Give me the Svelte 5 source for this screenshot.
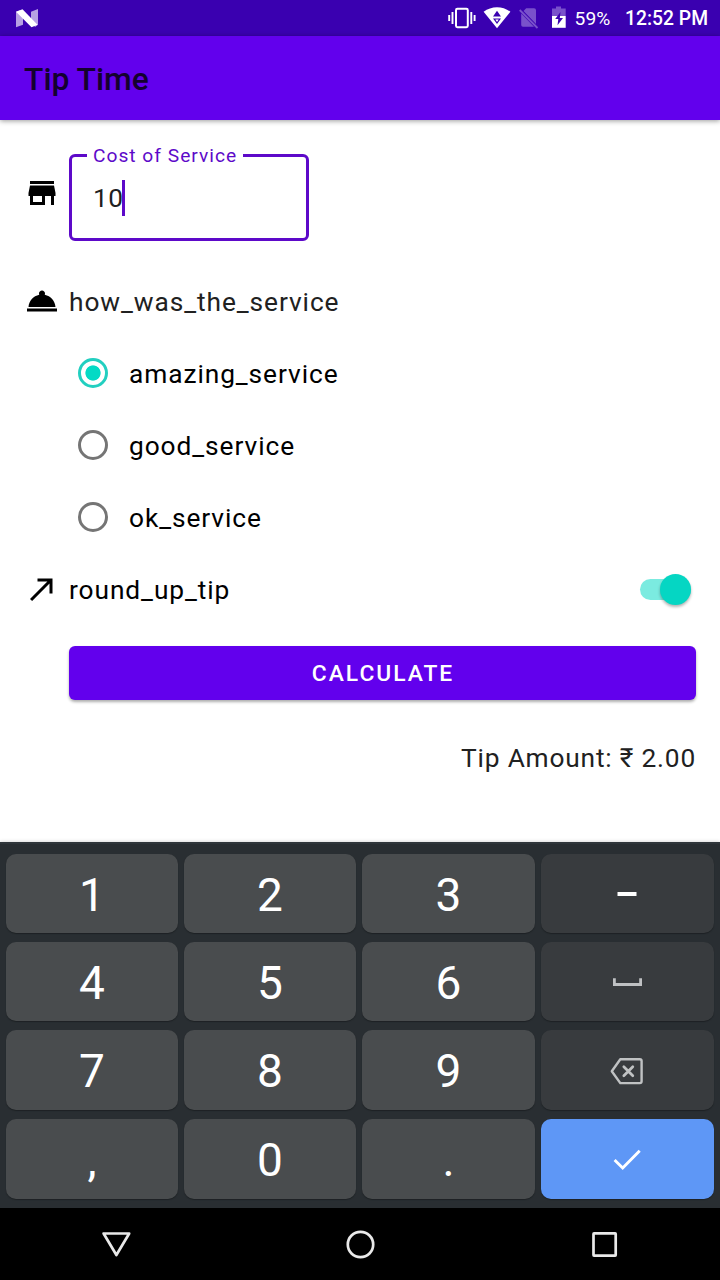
<script>
  const ratings = ['amazing_service', 'good_service', 'ok_service'];
  let selected = $state('amazing_service');
  const keys = ['1', '2', '3', 'minus', '4', '5', '6', 'space', '7', '8', '9', 'delete', ',', '0', '.', 'done'];
  const special = ['minus', 'space', 'delete', 'done'];
</script>

<div class="screen">
  <header class="status">
    <svg class="n" width="24" height="20" viewBox="0 0 24 20">
      <path d="M1 2.8 5 1.2 8 7V15.8L1 18.2zM16 2.7 23 0V15.8L20 18 16 12z" fill="#b7a0e3" />
      <path d="M1 2.8 7.5 0.3 22.5 15.8 16.5 18.2z" fill="#fff" />
    </svg>
    <div class="tray">
      <svg width="28" height="24" viewBox="0 0 28 24">
        <rect x="8" y="2.8" width="11.8" height="18.4" rx="1.4" fill="none" stroke="#fff" stroke-width="2" />
        <path d="M1.2 9v6M4.5 6v12M23.3 6v12M26.6 9v6" stroke="#fff" stroke-width="1.9" />
      </svg>
      <svg class="wifi" width="28" height="24" viewBox="0 0 28 24">
        <path d="M.6 5.7C8.5-.4 19.5-.4 27.4 5.7L14 22.3z" fill="#fff" />
        <path d="M14 4.8 18 10.5H10zM10 12.5h8L14 18z" fill="#3a00b0" />
        <path d="M12.3 13.6h3.4L14 16z" fill="#fff" />
      </svg>
      <svg class="sim" width="22" height="24" viewBox="0 0 22 24">
        <path d="M8.2 2.2H16a2 2 0 0 1 2 2V18L5.5 5zM3.2 7.4 16 20.7H5a1.8 1.8 0 0 1-1.8-1.8z" fill="#7951cb" />
        <path d="M1.7 4 19.5 22" stroke="#7951cb" stroke-width="1.8" />
      </svg>
      <svg class="battery" width="16" height="24" viewBox="0 0 16 24">
        <path d="M5 .4h5v2.2h4.7V10H1V2.6h4z" fill="#7951cb" />
        <path d="M1 10h13.7v11.8H1z" fill="#fff" />
        <path d="M9.5 6 4.2 13h3.1l-.8 6.2L12 12H8.8z" fill="#3a00b0" />
      </svg>
      <span class="percent">59%</span>
      <span class="clock">12:52 PM</span>
    </div>
  </header>

  <div class="appbar"><h1>Tip Time</h1></div>

  <main>
    <div class="cost">
      <svg class="icon" width="36" height="36" viewBox="0 0 24 24"><path d="M20 4H4v2h16V4zm1 10v-2l-1-5H4l-1 5v2h1v6h10v-6h4v6h2v-6h1zm-9 4H6v-4h6v4z" /></svg>
      <fieldset>
        <legend>Cost of Service</legend>
        <div class="entry"><span>10</span><i class="caret"></i></div>
      </fieldset>
    </div>

    <div class="row question">
      <svg class="icon" width="36" height="36" viewBox="0 0 24 24"><path d="M2 17h20v2H2zm11.84-9.21c.1-.24.16-.51.16-.79 0-1.1-.9-2-2-2s-2 .9-2 2c0 .28.06.55.16.79C6.25 8.6 3.27 11.93 3 16h18c-.27-4.07-3.25-7.4-7.16-8.21z" /></svg>
      <span>how_was_the_service</span>
    </div>

    <div class="options">
      {#each ratings as rating}
        <label class="option">
          <input type="radio" name="rating" value={rating} bind:group={selected} />
          <span>{rating}</span>
        </label>
      {/each}
    </div>

    <div class="row round">
      <svg class="icon" width="36" height="36" viewBox="0 0 24 24"><path d="M9 5v2h6.59L4 18.59 5.41 20 17 8.41V15h2V5z" /></svg>
      <span>round_up_tip</span>
      <div class="switch"><i></i></div>
    </div>

    <button class="calculate">CALCULATE</button>
    <p class="result">Tip Amount: ₹ 2.00</p>
  </main>

  <section class="keyboard">
    {#each keys as key}
      <button class="key" class:dark={special.includes(key)} class:done={key === 'done'} aria-label={key}>
        {#if key === 'minus'}
          <svg width="36" height="36" viewBox="0 0 36 36"><path d="M8.5 18h19" stroke="#fff" stroke-width="4" /></svg>
        {:else if key === 'space'}
          <svg width="36" height="36" viewBox="0 0 36 36"><path d="M5.4 14.3v6.2h26.2v-6.2" fill="none" stroke="#bfc1c3" stroke-width="2.8" /></svg>
        {:else if key === 'delete'}
          <svg width="36" height="36" viewBox="0 0 36 36" fill="none" stroke="#c0c2c3" stroke-width="2.4" stroke-linejoin="round" stroke-linecap="round">
            <path d="M11.3 7.3H30.8a1.8 1.8 0 0 1 1.8 1.8v20.2a1.8 1.8 0 0 1-1.8 1.8H11.3L2.8 19.2z" />
            <path d="m14.8 14.7 9 9m0-9-9 9" stroke-width="2.7" />
          </svg>
        {:else if key === 'done'}
          <svg width="36" height="36" viewBox="0 0 36 36"><path d="m5.6 19 8.1 8 17-17.3" fill="none" stroke="#fff" stroke-width="2.9" /></svg>
        {:else}
          <span>{key}</span>
        {/if}
      </button>
    {/each}
  </section>

  <nav>
    <svg width="36" height="36" viewBox="0 0 36 36"><path d="M5.6 7.5h25.6L18.4 29z" /></svg>
    <svg width="36" height="36" viewBox="0 0 36 36"><circle cx="18.5" cy="18.5" r="12.7" /></svg>
    <svg width="36" height="36" viewBox="0 0 36 36"><rect x="7.5" y="7.4" width="22.2" height="22.2" rx=".5" /></svg>
  </nav>
</div>

<style>
  .screen, .screen * { box-sizing: border-box; }
  .screen { width: 720px; height: 1280px; display: flex; flex-direction: column; background: #fff; font-family: Roboto, sans-serif; color: #000; overflow: hidden; }
  svg { display: block; flex: none; }
  button { border: 0; padding: 0; font-family: inherit; }
  .status { height: 36px; flex: none; display: flex; align-items: center; justify-content: space-between; background: #3a00b0; color: #fff; padding: 0 12px 0 15px; }
  .n { margin-top: 2px; }
  .tray { display: flex; align-items: center; }
  .wifi { margin-left: 7px; }
  .sim { margin-left: 7px; }
  .battery { margin-left: 11px; }
  .percent { margin-left: 8px; width: 50.5px; font-size: 19.2px; line-height: 35px; padding-top: 1px; }
  .clock { font-weight: 500; font-size: 19.3px; line-height: 35px; padding-top: 1px; }
  .appbar { height: 84px; flex: none; display: flex; align-items: center; padding: 2px 24px 0; background: #6200ed; box-shadow: 0 1px 5px rgba(0, 0, 0, .4); z-index: 1; }
  h1 { margin: 0; font-size: 31.8px; font-weight: 500; color: #14012f; }
  main { height: 722px; flex: none; padding: 23px 24px 0; display: flex; flex-direction: column; font-size: 26.3px; letter-spacing: .92px; }
  .icon { margin-right: 9px; }
  .row .icon { margin-bottom: 2px; }
  .cost { display: flex; align-items: center; height: 98px; }
  .cost .icon { margin-top: 2px; }
  fieldset { margin: 0; padding: 0 21px; width: 240px; height: 97px; border: 3px solid #5d09c9; border-radius: 6px; min-width: 0; color: #212121; }
  legend { padding: 1px 6px 0; margin-left: -6px; font-size: 19.2px; line-height: 22px; letter-spacing: 1px; color: #5d09c9; }
  .entry { display: flex; align-items: center; height: 62px; letter-spacing: .4px; }
  .caret { width: 3px; height: 36px; background: #5d09c9; margin-left: -1.5px; }
  .row { display: flex; align-items: center; }
  .question { height: 72px; margin-top: 25px; color: #212121; }
  .options { padding-left: 54px; }
  .option { display: flex; align-items: center; height: 72px; }
  input { appearance: none; margin: 0 21px 2px 0; width: 30px; height: 30px; border: 3px solid #757575; border-radius: 50%; }
  input:checked { border-color: #22cfc0; background: radial-gradient(circle, #03dac5 7.2px, transparent 8px); }
  .round { height: 72px; }
  .switch { margin: 0 5px 2px auto; width: 51px; height: 21px; border-radius: 11px; background: #7bebe0; display: flex; align-items: center; justify-content: flex-end; }
  .switch i { width: 31px; height: 31px; border-radius: 50%; background: #05d6c3; box-shadow: 0 2px 3px rgba(0, 0, 0, .3); flex: none; }
  .calculate { margin: 20px 0 0 45px; height: 54px; border-radius: 6px; background: #6200ed; color: #fff; font-size: 22.8px; font-weight: 500; letter-spacing: 2px; padding: 1px 0 0 1px; box-shadow: 0 2px 3px rgba(0, 0, 0, .32); }
  .result { margin: 42px 0 0; line-height: 32px; text-align: right; color: #212121; letter-spacing: .8px; }
  .keyboard { height: 366px; flex: none; padding: 10px 6px 0; border-top: 2px solid #30363b; background: #292e32; display: grid; grid-template-columns: 172px 172px 173px 173px; grid-template-rows: 79px 79px 80px 80px; gap: 9px 6px; align-content: start; box-shadow: 0 0 4px rgba(0, 0, 0, .2); }
  .key { display: flex; align-items: center; justify-content: center; border-radius: 10px; background: #494c4e; color: #fff; font-size: 46px; box-shadow: 0 1px 1px #1d2124; }
  .key svg { margin-right: 2px; }
  .key span { line-height: 54px; padding-top: 2px; }
  .dark { background: #383b3e; }
  .done { background: #5e97f6; }
  nav { height: 72px; flex: none; background: #000; display: flex; align-items: center; justify-content: space-between; padding: 0 98px; }
  nav svg { fill: none; stroke: #e9e9e9; stroke-width: 2.7; stroke-linejoin: round; }
</style>
